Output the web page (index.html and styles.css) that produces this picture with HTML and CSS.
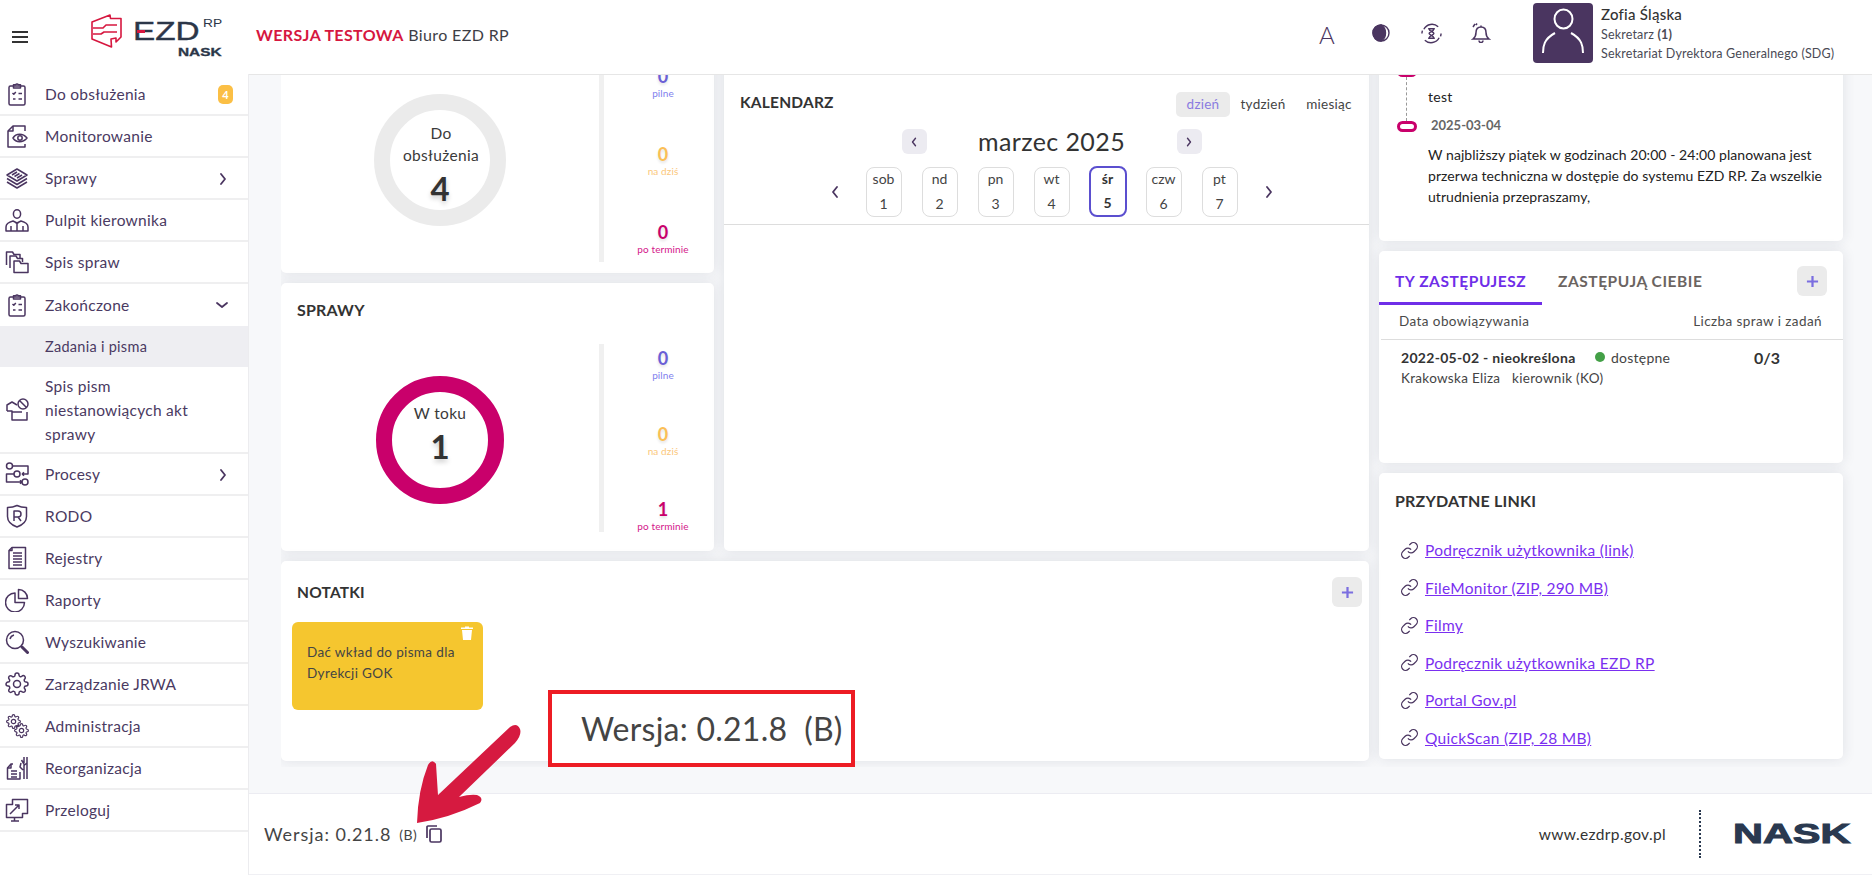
FILE: index.html
```html
<!DOCTYPE html>
<html lang="pl">
<head>
<meta charset="utf-8">
<title>EZD RP</title>
<link rel="stylesheet" href="styles.css">
</head>
<body>
<svg class="sprite" width="0" height="0" aria-hidden="true">
  <symbol id="i-clip" viewBox="0 0 24 24"><rect x="4" y="4" width="16" height="19" rx="1.5"/><path d="M8.5 4V2.800h2.200a1.400 1.400 0 0 1 2.600 0h2.200V6h-7z"/><path d="M7.500 11l1.300 1.300 2-2.300M13.500 11.500h3.500M8 17h2.500M13.500 17h3.500"/></symbol>
  <symbol id="i-eye" viewBox="0 0 24 24"><path d="M20 7V2H8L3 7v16h17v-3"/><path d="M8 2v5H3"/><path d="M8 14c3-5 10-5 14 0-4 5-11 5-14 0z"/><circle cx="15" cy="14" r="2.200"/></symbol>
  <symbol id="i-layers" viewBox="0 0 24 24"><path d="M12 3l10 6-10 6L2 9z"/><path d="M2 12.500l10 6 10-6M2 16l10 6 10-6"/><path d="M7 9l5-3M9.500 10.500l5-3M12 12l5-3"/></symbol>
  <symbol id="i-boss" viewBox="0 0 24 24"><ellipse cx="12" cy="6" rx="3.600" ry="4.200"/><path d="M1 23v-4c0-3 3-5 7-6l4 2 4-2c4 1 7 3 7 6v4zM12 15v8M10.500 15h3M6 18v5M18 18v5"/></symbol>
  <symbol id="i-folders" viewBox="0 0 24 24"><path d="M1.500 15V2h6l1.500 2.500h6V8"/><path d="M5 18V6h6l1.500 2.500h5V12"/><path d="M9 22.500V11h5.500l1.500 2.500h7v9z"/></symbol>
  <symbol id="i-nofolder" viewBox="0 0 24 24"><path d="M2 13V7l5-3 5 3M2 13h5v9h15v-8"/><path d="M7 14h10"/><circle cx="18" cy="6" r="5"/><path d="M14.500 2.500l7 7"/></symbol>
  <symbol id="i-flow" viewBox="0 0 24 24"><circle cx="4.500" cy="4" r="3"/><circle cx="12" cy="12" r="3"/><circle cx="20" cy="20" r="3"/><path d="M7.500 4H23v8h-6M17 12l2-1.700M17 12l2 1.700M9 12H1.500v8H17M17 20l-2-1.700M17 20l-2 1.700"/></symbol>
  <symbol id="i-shield" viewBox="0 0 24 24"><path d="M12 1.500c3 1.500 6 2 9.500 2v9c0 5-4 8.500-9.500 10.500C6.500 21 2.500 17.500 2.500 12.500v-9c3.500 0 6.500-.5 9.500-2z"/><path d="M9 17V7h4a3 3 0 0 1 0 6H9M13 13l3 4"/></symbol>
  <symbol id="i-doc" viewBox="0 0 24 24"><path d="M7 1.500h13.500v21H4V4.500z"/><path d="M7 1.500v3H4M8 7h9M8 10h9M8 13h9M8 16h9M8 19h9"/></symbol>
  <symbol id="i-pie" viewBox="0 0 24 24"><path d="M10 5a9.500 9.500 0 1 0 9.500 9.500H10z"/><path d="M13.500 1.500a9 9 0 0 1 9 9h-9z"/></symbol>
  <symbol id="i-search" viewBox="0 0 24 24"><circle cx="10" cy="10" r="8.500"/><path d="M5 9a5.500 5.500 0 0 1 4-4"/><path class="thick" d="M17 17l5.500 5.500"/></symbol>
  <symbol id="i-gear" viewBox="0 0 24 24"><circle cx="12" cy="12" r="3.500"/><path d="M19.400 15a1.650 1.650 0 0 0 .33 1.820l.06.06a2 2 0 0 1 0 2.830 2 2 0 0 1-2.830 0l-.06-.06a1.650 1.650 0 0 0-1.820-.33 1.650 1.650 0 0 0-1 1.510V21a2 2 0 0 1-2 2 2 2 0 0 1-2-2v-.09A1.650 1.650 0 0 0 9 19.400a1.650 1.650 0 0 0-1.820.33l-.06.06a2 2 0 0 1-2.830 0 2 2 0 0 1 0-2.830l.06-.06a1.650 1.650 0 0 0 .33-1.820 1.650 1.650 0 0 0-1.510-1H3a2 2 0 0 1-2-2 2 2 0 0 1 2-2h.09A1.650 1.650 0 0 0 4.600 9a1.650 1.650 0 0 0-.33-1.820l-.06-.06a2 2 0 0 1 0-2.830 2 2 0 0 1 2.830 0l.06.06a1.650 1.650 0 0 0 1.820.33H9a1.650 1.650 0 0 0 1-1.510V3a2 2 0 0 1 2-2 2 2 0 0 1 2 2v.09a1.650 1.650 0 0 0 1 1.510 1.650 1.650 0 0 0 1.820-.33l.06-.06a2 2 0 0 1 2.830 0 2 2 0 0 1 0 2.830l-.06.06a1.650 1.650 0 0 0-.33 1.820V9a1.650 1.650 0 0 0 1.510 1H21a2 2 0 0 1 2 2 2 2 0 0 1-2 2h-.09a1.650 1.650 0 0 0-1.510 1z"/></symbol>
  <symbol id="i-link" viewBox="0 0 24 24"><path d="M10 13a5 5 0 0 0 7.540.54l3-3a5 5 0 0 0-7.070-7.070l-1.720 1.710"/><path d="M14 11a5 5 0 0 0-7.540-.54l-3 3a5 5 0 0 0 7.070 7.070l1.710-1.710"/></symbol>
  <symbol id="i-reorg" viewBox="0 0 24 24"><path d="M8 8H6L2.500 12v11H15V16"/><path d="M6 8v4H2.500M6 15h6M6 18h6M6 21h6"/><path d="M19 1v6M22 1v6M16.500 4l3 5 2.500-2M19 9v14M22 7v16M16 7l-1 4 3 3"/></symbol>
  <symbol id="i-login" viewBox="0 0 24 24"><path d="M1.500 6.500h6v-5h15v14h-5v4h-16zM9.500 19.500V23M6 23h8"/><path d="M7 14l7-7M10 7h4v4M5 16l2-2"/></symbol>
</svg>

<header class="topbar">
  <svg class="burger" viewBox="0 0 16 12"><path d="M0 1h16M0 6h16M0 11h16"/></svg>
  <div class="logo">
    <svg class="logo-mark" viewBox="0 0 31 34"><path d="M1 8l18-7 .5 3.500H30V23L25 28v-4l-5 1 .5 8L1 25z"/><path d="M2 14h10l3-3h11M2 20h8l3-2h13"/></svg>
    <span class="logo-ezd">EZD</span><i class="logo-bar"></i>
    <span class="logo-rp">RP</span>
    <span class="logo-nask">NASK</span>
  </div>
  <div class="app-title"><b>WERSJA TESTOWA</b> Biuro EZD RP</div>
  <div class="top-right">
    <span class="font-a">A</span>
    <svg class="ic-moon" viewBox="0 0 18 18"><circle cx="9" cy="9" r="8"/><path class="fill" d="M9 1a8 8 0 1 0 0 16c3-1.500 4.500-4.500 4.500-8S12 2.500 9 1z"/></svg>
    <svg class="ic-hour" viewBox="0 0 22 22"><path d="M3 6.500A9.500 9.500 0 0 1 18 4M19 15.500A9.500 9.500 0 0 1 4 18M1 11a10 10 0 0 1 .500-3M21 11a10 10 0 0 1-.500 3"/><path d="M7.500 6h7M7.500 16h7M8.500 6c0 3 5 3.500 5 5s-5 2-5 5M13.500 6c0 3-5 3.500-5 5s5 2 5 5"/></svg>
    <svg class="ic-bell" viewBox="0 0 20 20"><path d="M10 4c-3.500 0-5 2.500-5 5.500 0 3-1 5-3 6.500h16c-2-1.500-3-3.500-3-6.500C15 6.500 13.500 4 10 4zM10 4V2.500M8 17.500a2 2 0 0 0 4 0M2 4l2-3M5 2l1-1.500"/></svg>
    <svg class="avatar" viewBox="0 0 60 60"><ellipse cx="30.500" cy="16" rx="9" ry="9.500"/><path d="M10 50c0-7 1-14 12-20M50 50c0-7-1-14-12-20"/></svg>
    <div class="user">
      <div class="user-name">Zofia Śląska</div>
      <div class="user-sub user-sub-first">Sekretarz <b>(1)</b></div>
      <div class="user-sub">Sekretariat Dyrektora Generalnego (SDG)</div>
    </div>
  </div>
</header>

<div class="shell">
  <nav class="side">
    <a class="item"><svg class="ni"><use href="#i-clip"/></svg><span>Do obsłużenia</span><em class="badge">4</em></a>
    <a class="item"><svg class="ni"><use href="#i-eye"/></svg><span>Monitorowanie</span></a>
    <a class="item"><svg class="ni"><use href="#i-layers"/></svg><span>Sprawy</span><svg class="chev" viewBox="0 0 8 12"><path d="M2 1l4 5-4 5"/></svg></a>
    <a class="item"><svg class="ni"><use href="#i-boss"/></svg><span>Pulpit kierownika</span></a>
    <a class="item"><svg class="ni"><use href="#i-folders"/></svg><span>Spis spraw</span></a>
    <a class="item item-open"><svg class="ni"><use href="#i-clip"/></svg><span>Zakończone</span><svg class="chev chev-down" viewBox="0 0 12 8"><path d="M1 2l5 4 5-4"/></svg></a>
    <a class="item item-active"><span>Zadania i pisma</span></a>
    <a class="item item-tall"><svg class="ni"><use href="#i-nofolder"/></svg><span>Spis pism niestanowiących akt sprawy</span></a>
    <a class="item"><svg class="ni"><use href="#i-flow"/></svg><span>Procesy</span><svg class="chev" viewBox="0 0 8 12"><path d="M2 1l4 5-4 5"/></svg></a>
    <a class="item"><svg class="ni"><use href="#i-shield"/></svg><span>RODO</span></a>
    <a class="item"><svg class="ni"><use href="#i-doc"/></svg><span>Rejestry</span></a>
    <a class="item"><svg class="ni"><use href="#i-pie"/></svg><span>Raporty</span></a>
    <a class="item"><svg class="ni"><use href="#i-search"/></svg><span>Wyszukiwanie</span></a>
    <a class="item"><svg class="ni"><use href="#i-gear"/></svg><span>Zarządzanie JRWA</span></a>
    <a class="item"><span class="ni-gears"><svg class="g1"><use href="#i-gear"/></svg><svg class="g2"><use href="#i-gear"/></svg></span><span>Administracja</span></a>
    <a class="item"><svg class="ni"><use href="#i-reorg"/></svg><span>Reorganizacja</span></a>
    <a class="item"><svg class="ni"><use href="#i-login"/></svg><span>Przeloguj</span></a>
  </nav>

  <div class="main">
    <div class="scroll">
      <div class="grid">
        <div class="col-wide">
          <div class="row-top">
            <div class="col-left">
              <section class="card stat-card stat-a">
                <div class="donut-area">
                  <div class="donut donut-grey">
                    <span class="d-label">Do obsłużenia</span>
                    <strong class="d-num">4</strong>
                  </div>
                </div>
                <div class="stats">
                  <div class="stat s-blue"><b>0</b><small>pilne</small></div>
                  <div class="stat s-orange"><b>0</b><small>na dziś</small></div>
                  <div class="stat s-pink"><b>0</b><small>po terminie</small></div>
                </div>
              </section>
              <section class="card case-card">
                <h2 class="title">SPRAWY</h2>
                <div class="stat-card stat-b">
                  <div class="donut-area">
                    <div class="donut donut-pink">
                      <span class="d-label">W toku</span>
                      <strong class="d-num">1</strong>
                    </div>
                  </div>
                  <div class="stats">
                    <div class="stat s-blue"><b>0</b><small>pilne</small></div>
                    <div class="stat s-orange"><b>0</b><small>na dziś</small></div>
                    <div class="stat s-pink"><b>1</b><small>po terminie</small></div>
                  </div>
                </div>
              </section>
            </div>
            <section class="card cal">
              <div class="cal-head">
                <h2 class="title">KALENDARZ</h2>
                <div class="cal-tabs">
                  <span class="cal-tab cal-tab-on">dzień</span>
                  <span class="cal-tab">tydzień</span>
                  <span class="cal-tab">miesiąc</span>
                </div>
              </div>
              <div class="cal-nav">
                <span class="nav-btn"><svg class="chev" viewBox="0 0 8 12"><path d="M6 1L2 6l4 5"/></svg></span>
                <span class="cal-month">marzec 2025</span>
                <span class="nav-btn"><svg class="chev" viewBox="0 0 8 12"><path d="M2 1l4 5-4 5"/></svg></span>
              </div>
              <div class="cal-week">
                <span class="wk-arrow"><svg class="chev" viewBox="0 0 8 12"><path d="M6 1L2 6l4 5"/></svg></span>
                <div class="day"><span>sob</span><span>1</span></div>
                <div class="day"><span>nd</span><span>2</span></div>
                <div class="day"><span>pn</span><span>3</span></div>
                <div class="day"><span>wt</span><span>4</span></div>
                <div class="day day-on"><span>śr</span><span>5</span></div>
                <div class="day"><span>czw</span><span>6</span></div>
                <div class="day"><span>pt</span><span>7</span></div>
                <span class="wk-arrow"><svg class="chev" viewBox="0 0 8 12"><path d="M2 1l4 5-4 5"/></svg></span>
              </div>
            </section>
          </div>
          <section class="card notes">
            <div class="notes-head">
              <h2 class="title">NOTATKI</h2>
              <span class="plus-btn"><svg viewBox="0 0 14 14"><path d="M7 1v12M1 7h12"/></svg></span>
            </div>
            <div class="note">
              <svg class="trash" viewBox="0 0 12 14"><path d="M4 1.500V.500h4v1h4V3H0V1.500zM1 4h10l-1 10H2z"/></svg>
              <p>Dać wkład do pisma dla Dyrekcji GOK</p>
            </div>
          </section>
        </div>

        <div class="col-right">
          <section class="card news">
            <div class="rail"><i class="pill"></i><i class="dash"></i><i class="pill pill-open"></i></div>
            <div class="news-text">
              <p class="n-test">test</p>
              <p class="n-date">2025-03-04</p>
              <p class="n-body">W najbliższy piątek w godzinach 20:00 - 24:00 planowana jest przerwa techniczna w dostępie do systemu EZD RP. Za wszelkie utrudnienia przepraszamy,</p>
            </div>
          </section>
          <section class="card subs">
            <div class="tabs">
              <span class="tab tab-on">TY ZASTĘPUJESZ</span>
              <span class="tab">ZASTĘPUJĄ CIEBIE</span>
              <span class="plus-btn"><svg viewBox="0 0 14 14"><path d="M7 1v12M1 7h12"/></svg></span>
            </div>
            <div class="sub-head"><span>Data obowiązywania</span><span>Liczba spraw i zadań</span></div>
            <div class="sub-row">
              <div class="sub-line"><b class="sub-date">2022-05-02 - nieokreślona</b><i class="dot"></i><span class="sub-state">dostępne</span><b class="sub-count">0/3</b></div>
              <div class="sub-line2"><span>Krakowska Eliza</span><span>kierownik (KO)</span></div>
            </div>
          </section>
          <section class="card links">
            <h2 class="title">PRZYDATNE LINKI</h2>
            <ul class="link-list">
              <li><svg class="li"><use href="#i-link"/></svg><a>Podręcznik użytkownika (link)</a></li>
              <li><svg class="li"><use href="#i-link"/></svg><a>FileMonitor (ZIP, 290 MB)</a></li>
              <li><svg class="li"><use href="#i-link"/></svg><a>Filmy</a></li>
              <li><svg class="li"><use href="#i-link"/></svg><a>Podręcznik użytkownika EZD RP</a></li>
              <li><svg class="li"><use href="#i-link"/></svg><a>Portal Gov.pl</a></li>
              <li><svg class="li"><use href="#i-link"/></svg><a>QuickScan (ZIP, 28 MB)</a></li>
            </ul>
          </section>
        </div>
      </div>
    </div>
    <footer class="foot">
      <span class="ver">Wersja: 0.21.8</span>
      <span class="ver-b">(B)</span>
      <svg class="copy" viewBox="0 0 16 18"><path d="M1 13V2a1 1 0 0 1 1-1h9"/><rect x="4" y="4" width="11" height="13" rx="1.500"/></svg>
      <span class="www">www.ezdrp.gov.pl</span>
      <i class="foot-sep"></i>
      <span class="foot-nask"><span>NASK</span></span>
    </footer>
  </div>
</div>

<div class="callout">Wersja: 0.21.8&nbsp; (B)</div>
<svg class="arrow" viewBox="0 0 120 110"><path d="M2 102Q3 69 13 44Q17 37 21 43Q22 59 23 74L95 6Q102 1 105 8Q107 14 100 22L44 76Q55 73 62 74Q69 77 65 82Q35 97 2 102Z"/></svg>
</body>
</html>
```
FILE: styles.css
```css
* { box-sizing: border-box; }
html, body { margin: 0; height: 875px; overflow: hidden; }
body { font-family: Lato, "Noto Sans", sans-serif; color: #333; background: #fff; position: relative; font-size: 14px; letter-spacing: .25px; }
h2, p, ul { margin: 0; padding: 0; }
.sprite { position: absolute; }

/* top bar */
.topbar { height: 75px; display: flex; align-items: center; padding-left: 12px; border-bottom: 1px solid #e6e6e6; background: #fff; }
.burger { width: 16px; height: 12px; stroke: #333; stroke-width: 1.8; fill: none; flex: none; }
.logo { position: relative; width: 131px; height: 43px; margin-left: 63px; margin-top: -3px; flex: none; }
.logo-mark { position: absolute; left: 0; top: 0; width: 31px; height: 34px; fill: none; stroke: #d6173f; stroke-width: 1.6; stroke-linejoin: round; }
.logo-ezd { position: absolute; left: 42px; top: 2px; font: 400 26px/30px "Liberation Sans", sans-serif; letter-spacing: 0; color: #2b3648; transform: scaleX(1.28); transform-origin: left center; -webkit-text-stroke: .4px #2b3648; }
.logo-bar { position: absolute; left: 46px; top: 16px; width: 8px; height: 3px; background: #d6173f; }
.logo-rp { position: absolute; left: 112px; top: 3px; font: 400 11px/12px "Liberation Sans", sans-serif; letter-spacing: 0; color: #2b3648; transform: scaleX(1.25); transform-origin: left center; }
.logo-nask { position: absolute; left: 87px; top: 32px; font: 700 11px/13px "Liberation Sans", sans-serif; letter-spacing: 0; color: #2b3648; transform: scaleX(1.4); transform-origin: left center; -webkit-text-stroke: .3px #2b3648; }
.app-title { margin-left: 34px; font-size: 16px; color: #3e3e46; white-space: nowrap; margin-top: -6px; letter-spacing: .38px; }
.app-title b { color: #d6173f; font-weight: 700; }
.top-right { margin-left: auto; display: flex; align-items: center; flex: none; margin-top: -8px; width: 553px; }
.font-a { width: 16px; font-weight: 300; font-size: 24px; line-height: 24px; color: #4a3560; margin-right: 37px; margin-top: 4px; letter-spacing: 0; }
.ic-moon { width: 18px; height: 18px; margin-right: 31px; fill: none; stroke: #4a3560; stroke-width: 1.4; }
.ic-moon .fill { fill: #4a3560; }
.ic-hour { width: 21px; height: 21px; margin-right: 29px; fill: none; stroke: #4a3560; stroke-width: 1.5; }
.ic-bell { width: 20px; height: 20px; margin-right: 42px; fill: none; stroke: #4a3560; stroke-width: 1.5; }
.avatar { width: 60px; height: 60px; background: #4a3560; border-radius: 4px; fill: none; stroke: #fff; stroke-width: 2; margin-right: 8px; flex: none; }
.user { width: 271px; }
.user-name { font-size: 15px; line-height: 20px; font-weight: 500; color: #333; }
.user-sub { font-size: 12.5px; line-height: 19px; color: #4a4a55; white-space: nowrap; letter-spacing: .18px; }
.user-sub-first { margin-top: 1px; }

/* shell */
.shell { display: flex; height: 800px; }
.side { width: 249px; flex: none; border-right: 1px solid #ececef; background: #fff; margin-top: -1px; height: 801px; }
.item { display: flex; align-items: center; height: 42px; border-bottom: 2px solid #efeff0; padding-left: 5px; color: #4a3a62; font-size: 15.5px; letter-spacing: .28px; position: relative; }
.item > span:not(.ni-gears) { margin-left: 16px; }
.item-open { border-bottom: 0; height: 42px; }
.item-active { background: #eeeef2; border-bottom: 0; height: 41px; padding-left: 29px; font-size: 14.5px; }
.item-tall { height: 87px; line-height: 24px; }
.item-tall > span { width: 180px; }
.ni { width: 24px; height: 24px; flex: none; fill: none; stroke: #4a3560; stroke-width: 1.5; stroke-linejoin: round; }
.thick { stroke-width: 3; stroke-linecap: round; }
.ni-gears { width: 24px; height: 24px; position: relative; flex: none; }
.g1, .g2 { position: absolute; fill: none; stroke: #4a3560; stroke-width: 1.9; }
.g1 { width: 15px; height: 15px; left: 1px; top: 0; }
.g2 { width: 15px; height: 15px; left: 9px; top: 9px; }
.chev { width: 8px; height: 12px; fill: none; stroke: #4a3560; stroke-width: 1.8; stroke-linecap: round; stroke-linejoin: round; }
.item > .chev { position: absolute; right: 21px; top: 15px; }
.item > .chev-down { width: 12px; height: 8px; right: 20px; top: 17px; }
.badge { position: absolute; left: 218px; top: 11px; width: 15px; height: 19px; border-radius: 5px; background: #fbbf45; color: #fff; font: 700 11px/19px Lato, sans-serif; text-align: center; }

/* main */
.main { flex: 1; display: flex; flex-direction: column; min-width: 0; background: #f7f8fa; }
.scroll { height: 718px; overflow: hidden; flex: none; }
.grid { display: flex; gap: 10px; margin: -60px 0 0 32px; width: 1573px; height: 752px; overflow: hidden; }
.col-wide { width: 1088px; flex: none; display: flex; flex-direction: column; gap: 10px; }
.row-top { display: flex; gap: 10px; }
.col-left { width: 433px; flex: none; display: flex; flex-direction: column; gap: 10px; }
.col-right { width: 474px; flex: none; padding-right: 10px; display: flex; flex-direction: column; gap: 10px; }
.card { background: #fff; border-radius: 5px; box-shadow: 0 0 14px rgba(40, 50, 70, .11); }
.title { font-size: 16px; line-height: 20px; font-weight: 700; color: #333; letter-spacing: .2px; }

.stat-card { display: flex; }
.stat-a { height: 258px; padding-bottom: 11px; }
.donut-area { width: 318px; flex: none; display: flex; justify-content: center; align-items: flex-start; }
.stat-a .donut-area { padding-top: 79px; }
.stat-b .donut-area { padding-top: 32px; }
.donut { border-radius: 50%; text-align: center; display: flex; flex-direction: column; align-items: center; }
.donut-grey { width: 132px; height: 132px; border: 16px solid #ebebeb; padding-top: 12px; }
.donut-pink { width: 128px; height: 128px; border: 16px solid #c9006b; padding-top: 10px; }
.d-label { font-size: 15.5px; line-height: 22px; width: 92px; color: #3a3a3a; margin-left: 2px; letter-spacing: .35px; }
.donut-pink .d-label { margin-left: 0; }
.d-num { font-size: 33px; line-height: 45px; font-weight: 700; color: #333; text-shadow: 0 3px 5px rgba(0, 0, 0, .2); letter-spacing: 0; }
.donut-pink .d-num { line-height: 44px; }
.stats { flex: 1; border-left: 5px solid #f0f0f0; display: flex; flex-direction: column; padding-left: 8px; }
.stat-a .stats { padding-top: 50px; gap: 44px; }
.stat-b .stats { padding-top: 3px; gap: 41.5px; }
.stat { height: 34px; text-align: center; }
.stat b { display: block; font-size: 18px; line-height: 22px; font-weight: 700; text-shadow: 0 2px 3px rgba(0, 0, 0, .12); letter-spacing: 0; }
.stat small { display: block; font-size: 10px; line-height: 12px; letter-spacing: .1px; }
.s-blue b { color: #6a5fd6; } .s-blue small { color: #7f80ee; }
.s-orange b { color: #fbbf55; } .s-orange small { color: #fbc77a; }
.s-pink b { color: #c9006b; } .s-pink small { color: #d4168a; }
.case-card { height: 268px; }
.case-card .title { padding: 17px 0 0 16px; height: 61px; }

/* calendar */
.cal { flex: 1; padding-top: 77px; height: 536px; }
.cal-head { display: flex; justify-content: space-between; padding: 0 7px 0 16px; height: 25px; }
.cal-head .title { font-size: 15.5px; }
.cal-tabs { display: flex; }
.cal-tab { height: 25px; line-height: 25px; text-align: center; font-size: 13.5px; color: #444; width: 66px; }
.cal-tab-on { background: #ebebeb; color: #8a7be0; border-radius: 5px; width: 54px; }
.cal-nav { display: flex; justify-content: center; align-items: center; padding-left: 10px; margin-top: 12px; }
.nav-btn { width: 25px; height: 25px; border-radius: 6px; background: #ecebf1; display: flex; align-items: center; justify-content: center; }
.nav-btn .chev { width: 6px; height: 10px; }
.cal-month { width: 250px; text-align: center; font-size: 25px; line-height: 25px; color: #333; letter-spacing: .4px; }
.cal-week { display: flex; justify-content: center; align-items: center; gap: 20px; padding: 0 0 7px 10px; margin-top: 12px; border-bottom: 1px solid #ddd; }
.wk-arrow { width: 22px; display: flex; justify-content: center; }
.day { width: 36px; height: 50px; border: 1px solid #ddd; border-radius: 8px; display: flex; flex-direction: column; align-items: center; justify-content: space-between; padding: 1px 0 2px; font-size: 14px; line-height: 20px; color: #444; letter-spacing: 0; }
.day-on { width: 38px; height: 51px; margin: 0 -1px; border: 2px solid #5b4fcf; font-weight: 700; color: #333; }

/* notes */
.notes { height: 200px; position: relative; padding: 16px 7px 0 11px; }
.notes-head { display: flex; justify-content: space-between; height: 45px; }
.notes-head .title { padding: 5px 0 0 5px; font-size: 15.5px; }
.plus-btn { width: 30px; height: 30px; border-radius: 6px; background: #ebebeb; display: flex; align-items: center; justify-content: center; }
.plus-btn svg { width: 13px; height: 13px; stroke: #7b6ee0; stroke-width: 2.4; fill: none; }
.note { width: 191px; height: 88px; border-radius: 6px; background: #f5c62f; padding: 20px 15px 0; position: relative; }
.note p { font-size: 13.5px; line-height: 21px; color: #444; letter-spacing: .36px; }
.trash { position: absolute; left: 169px; top: 4px; width: 12px; height: 14px; fill: #fff; }

/* right column */
.news { height: 226px; display: flex; padding-top: 51px; }
.rail { width: 49px; padding-left: 18px; flex: none; display: flex; flex-direction: column; align-items: flex-start; }
.pill { width: 20px; height: 11px; border-radius: 6px; background: #c9006b; display: block; }
.pill-open { background: #fff; border: 3px solid #c9006b; }
.dash { display: block; height: 44px; margin-left: 9px; border-left: 1px dashed #999; }
.news-text { padding: 20px 16px 0 0; flex: 1; color: #222; }
.n-test { line-height: 21px; font-size: 14px; }
.n-date { line-height: 20px; margin-top: 8px; padding-left: 3px; font-size: 13px; font-weight: 700; color: #666; letter-spacing: 0; }
.n-body { line-height: 21px; margin-top: 9px; font-size: 14px; letter-spacing: .06px; }

.subs { height: 212px; }
.tabs { display: flex; height: 54px; position: relative; }
.tab { height: 54px; padding: 20px 0 0 16px; font-size: 15.5px; line-height: 20px; font-weight: 700; color: #6b6461; letter-spacing: .55px; }
.tab-on { width: 163px; color: #6f2ee8; border-bottom: 3px solid #6f2ee8; }
.tabs .plus-btn { position: absolute; right: 16px; top: 15px; }
.sub-head { margin-left: 2px; height: 35px; display: flex; justify-content: space-between; align-items: center; padding: 0 21px 3px 18px; border-bottom: 1px solid #ddd; font-size: 13.5px; color: #4a4a4a; letter-spacing: .42px; }
.sub-row { padding: 7px 0 0 22px; }
.sub-line { display: flex; align-items: center; height: 20px; position: relative; }
.sub-date { width: 194px; font-size: 14px; color: #333; letter-spacing: .3px; white-space: nowrap; }
.dot { width: 10px; height: 10px; border-radius: 50%; background: #43a047; }
.sub-state { margin-left: 6px; font-size: 14px; color: #444; }
.sub-count { position: absolute; left: 353px; font-size: 16px; color: #333; letter-spacing: 0; }
.sub-line2 { margin-top: 1px; display: flex; gap: 11px; font-size: 13.5px; line-height: 20px; color: #444; letter-spacing: .3px; }
.sub-line2 span:first-child { width: 100px; white-space: nowrap; }

.links { height: 286px; padding: 18px 0 0 16px; }
.link-list { list-style: none; margin-top: 28px; display: flex; flex-direction: column; gap: 15.6px; }
.link-list li { display: flex; align-items: center; height: 22px; }
.li { width: 19px; height: 19px; margin: 0 6px 0 5px; flex: none; fill: none; stroke: #4a3560; stroke-width: 1.6; }
.link-list a { color: #7a2ff0; text-decoration: underline; font-size: 15.5px; letter-spacing: .3px; white-space: nowrap; }

/* footer */
.foot { height: 82px; flex: none; display: flex; align-items: center; background: #fff; border-top: 1px solid #ececf2; border-bottom: 1px solid #f0f0f4; padding: 0 21px 0 15px; color: #444; }
.ver { font-size: 18px; letter-spacing: .95px; }
.ver-b { font-size: 14px; margin-left: 8px; letter-spacing: .4px; }
.copy { width: 16px; height: 18px; margin-left: 9px; fill: none; stroke: #4a3560; stroke-width: 1.7; }
.www { margin-left: auto; font-size: 15.5px; letter-spacing: .35px; color: #333; }
.foot-sep { width: 0; height: 48px; border-left: 2px dotted #2a3950; margin: 0 32px 0 33px; }
.foot-nask { width: 118px; display: block; }
.foot-nask span { display: inline-block; font: 700 28px/28px "Liberation Sans", sans-serif; letter-spacing: 0; color: #2a3950; transform: scaleX(1.48); transform-origin: left center; -webkit-text-stroke: 1px #2a3950; }

/* annotations drawn over the screenshot */
.callout { position: absolute; left: 548px; top: 690px; width: 307px; height: 77px; border: 4px solid #ed1c24; background: #fff; padding-left: 29px; font-size: 32px; line-height: 69px; color: #444; letter-spacing: .25px; white-space: nowrap; }
.arrow { position: absolute; left: 415px; top: 721px; width: 120px; height: 110px; fill: #d61a40; }
```
